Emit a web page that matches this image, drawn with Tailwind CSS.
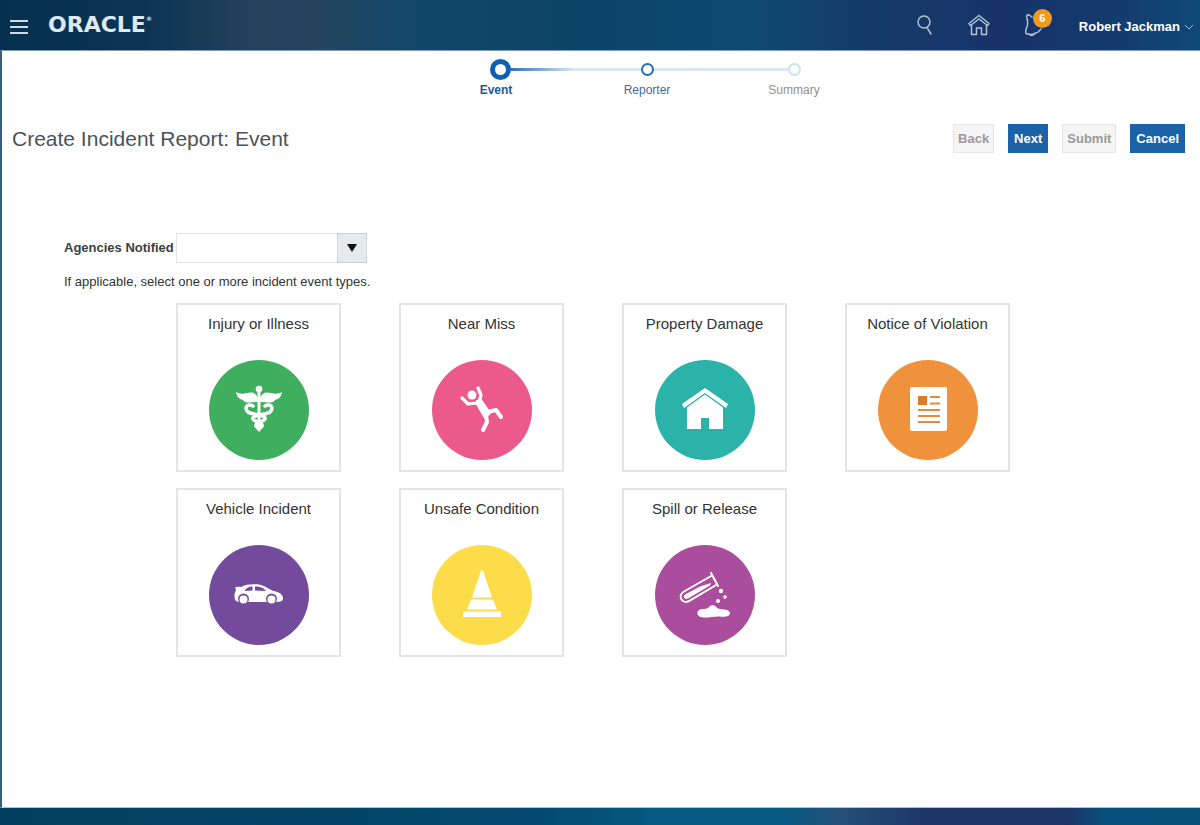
<!DOCTYPE html>
<html lang="en">
<head>
    <meta charset="UTF-8">
    <meta name="viewport" content="width=device-width, initial-scale=1.0">
    <title>Create Incident Report: Event</title>
    <script src="https://cdn.jsdelivr.net/npm/@tailwindcss/browser@4"></script>
</head>
<body class="min-h-screen flex flex-col bg-[#01466b] font-['Liberation_Sans',Arial,sans-serif] text-[13px] text-[#333]">
    <header class="h-[50px] flex items-center justify-between pl-2.5 pr-1.5 bg-[linear-gradient(90deg,#06304f_0%,#0b3454_12%,#24415c_21%,#24455f_27%,#12466a_34%,#0b4468_50%,#0c4a70_62%,#163a68_74%,#17336a_84%,#153a6c_92%,#0e4979_100%)]">
        <div class="flex items-center gap-5">
            <button type="button" aria-label="Menu" class="pt-1">
                <svg class="w-[18px] h-4" viewBox="0 0 18 16" fill="none" stroke="#d3dae0" stroke-width="2"><path d="M0 2h18M0 8h18M0 14h18"/></svg>
            </button>
            <a href="#" class="flex items-start font-bold text-[22px] leading-[50px] text-[#dfe9f1] font-['DejaVu_Sans',sans-serif]">ORACLE<span class="text-[6px] leading-[38px]">®</span></a>
        </div>
        <div class="flex items-center">
            <button type="button" aria-label="Search" class="mr-[33px]">
                <svg class="w-5 h-6" viewBox="0 0 20 24" fill="none" stroke="#b3c0d6" stroke-width="1.5" stroke-linecap="round"><circle cx="10" cy="9" r="6"/><path d="M13 14.500l4 6.500"/></svg>
            </button>
            <a href="#" aria-label="Home" class="mr-8">
                <svg class="w-6 h-6" viewBox="0 0 24 24" fill="none" stroke="#b3c0d6" stroke-width="1.500" stroke-linejoin="round"><path d="M4.500 12v9.500h5V15h5v6.500h5V12"/><path d="M2 10.500L12 2.500l10 8-1.500 2L12 6l-8.500 6.500z"/></svg>
            </a>
            <button type="button" aria-label="Notifications" class="relative mr-8">
                <svg class="w-6 h-6" viewBox="0 0 24 24" fill="none" stroke="#b3c0d6" stroke-width="1.500" stroke-linejoin="round" stroke-linecap="round"><path d="M6 2C4 1 3 3 4 5c1 4 1 8-1 11 0 2-1 5 1 5 4 1 8 0 11-2l3-3"/><path d="M6 2l3 2M6 21c2 2 5 2 6-1"/></svg>
                <span class="absolute -top-1 left-2.5 w-[19px] h-[19px] rounded-full bg-[#f09a1c] text-white text-[11px] leading-[19px] font-bold text-center">6</span>
            </button>
            <button type="button" class="flex items-center gap-1 pt-1 font-bold text-white">
                Robert Jackman
                <svg class="w-2.5 h-2" viewBox="0 0 10 8" fill="none" stroke="#a9bdd4"><path d="M1 2l4 4 4-4"/></svg>
            </button>
        </div>
    </header>

    <main class="grow bg-white border-l-2 border-l-[#34607e] border-t border-t-[#7f9db9] border-b border-b-[#a9c4d3]">
        <!-- progress -->
        <ol class="flex justify-center pl-[92px] pt-[7px] text-center text-[12px] leading-5">
            <li aria-current="step" class="w-[147px] font-bold text-[#1f5b98]">
                <div class="flex items-center justify-center h-[22px]">
                    <span class="flex-1"></span>
                    <span class="w-[21px] h-[21px] rounded-full border-[5px] border-[#0b62b5]"></span>
                    <span class="flex-1 h-[3px] bg-linear-to-r from-[#2a72b8] to-[#dbe8f3]"></span>
                </div>
                <span class="mr-2">Event</span>
            </li>
            <li class="w-[147px] text-[#3a6ea5]">
                <div class="flex items-center justify-center h-[22px]">
                    <span class="flex-1 h-[3px] bg-[#dbe8f3]"></span>
                    <span class="w-[13px] h-[13px] rounded-full border-2 border-[#2a6cad]"></span>
                    <span class="flex-1 h-[3px] bg-[#dbe8f3]"></span>
                </div>
                Reporter
            </li>
            <li class="w-[147px] text-[#8f8f8f]">
                <div class="flex items-center justify-center h-[22px]">
                    <span class="flex-1 h-[3px] bg-[#dbe8f3]"></span>
                    <span class="w-[13px] h-[13px] rounded-full border-2 border-[#cfe0ee]"></span>
                    <span class="flex-1"></span>
                </div>
                Summary
            </li>
        </ol>

        <div class="flex items-center justify-between mt-6 pl-2.5 pr-[15px]">
            <h1 class="text-[21px] leading-7 text-[#4a5359]">Create Incident Report: Event</h1>
            <div class="flex gap-3.5 font-bold">
                <button type="button" disabled class="h-[29px] px-1 border border-[#e6e7e9] bg-[#f5f5f6] text-[#9a9a9a]">Back</button>
                <button type="button" class="h-[29px] px-1.5 bg-[#1c62a8] text-white">Next</button>
                <button type="button" disabled class="h-[29px] px-1 border border-[#e6e7e9] bg-[#f5f5f6] text-[#9a9a9a]">Submit</button>
                <button type="button" class="h-[29px] px-1.5 bg-[#1c62a8] text-white">Cancel</button>
            </div>
        </div>

        <form class="mt-20 pl-[62px]">
            <div class="flex items-center gap-0.5">
                <label for="agencies" class="font-bold text-[#3b3f42]">Agencies Notified</label>
                <div class="relative">
                    <select id="agencies" class="appearance-none block w-[191px] h-[30px] px-2 border border-[#e3e5e7] bg-white"><option></option></select>
                    <span class="absolute right-0 top-0 w-[30px] h-[30px] flex items-center justify-center border border-[#cdd2d7] bg-[#e6eaed] pointer-events-none">
                        <svg class="w-2.5 h-2" viewBox="0 0 10 8" fill="#111"><path d="M0 0h10L5 8z"/></svg>
                    </span>
                </div>
            </div>
            <p class="mt-2.5 leading-[18px]">If applicable, select one or more incident event types.</p>

            <!-- event types -->
            <div class="flex flex-wrap gap-x-[58px] gap-y-4 max-w-[960px] mt-3 pl-28 text-[15px]">
                <button type="button" class="w-[165px] h-[169px] flex flex-col items-center justify-between pt-2 pb-2.5 border-2 border-[#e4e4e4]">
                    Injury or Illness
                    <svg class="w-[100px] h-[100px] rounded-full bg-[#3fae5f]" viewBox="0 0 100 100" fill="none" stroke="#fff" stroke-linecap="round">
                        <circle cx="50" cy="29" r="3.300" fill="#fff" stroke="none"/>
                        <path d="M50 31v39" stroke-width="3"/>
                        <path d="M49 38C46 32 43 32 38 33C34 34 30 34 27 32C28 38 31 39 34 40C36 44 42 42 49 42zM51 38C54 32 57 32 62 33C66 34 70 34 73 32C72 38 69 39 66 40C64 44 58 42 51 42z" fill="#fff" stroke="none"/>
                        <path d="M44 46C36 42 35 51 41 53C47 55 57 55 56 59C55 62 46 62 47 66L50 69M56 46C64 42 65 51 59 53C53 55 43 55 44 59C45 62 54 62 53 66L50 69" stroke-width="3.600"/>
                    </svg>
                </button>
                <button type="button" class="w-[165px] h-[169px] flex flex-col items-center justify-between pt-2 pb-2.5 border-2 border-[#e4e4e4]">
                    Near Miss
                    <svg class="w-[100px] h-[100px] rounded-full bg-[#eb5a8b]" viewBox="0 0 100 100" fill="none" stroke="#fff" stroke-linecap="round" stroke-linejoin="round">
                        <circle cx="40" cy="35" r="4.500" fill="#fff" stroke="none"/>
                        <path d="M30 38l6 6 9-1M46 28l3 7-2 8" stroke-width="3.200"/>
                        <path d="M45 41l4-1 9 13-5 5-8-14z" fill="#fff" stroke-width="2"/>
                        <path d="M55 52l9-2 5 7M54 55l1 7-4 8" stroke-width="4"/>
                    </svg>
                </button>
                <button type="button" class="w-[165px] h-[169px] flex flex-col items-center justify-between pt-2 pb-2.5 border-2 border-[#e4e4e4]">
                    Property Damage
                    <svg class="w-[100px] h-[100px] rounded-full bg-[#2bb3a9]" viewBox="0 0 100 100" fill="#fff">
                        <path d="M50 28l23 16-2 4-21-15-21 15-2-4z"/>
                        <path d="M50 34.500l18 13V69H54V58h-8v11H32V47.500z"/>
                    </svg>
                </button>
                <button type="button" class="w-[165px] h-[169px] flex flex-col items-center justify-between pt-2 pb-2.5 border-2 border-[#e4e4e4]">
                    Notice of Violation
                    <svg class="w-[100px] h-[100px] rounded-full bg-[#f0923b]" viewBox="0 0 100 100">
                        <rect x="32" y="27" width="37" height="44" rx="2" fill="#fff"/>
                        <path d="M40 36h9v9h-9z" fill="#e07b25"/>
                        <path d="M52 37h10M52 43.500h10M40 50h22M40 56h22M40 62h22" stroke="#e58a3c" stroke-width="2"/>
                    </svg>
                </button>
                <button type="button" class="w-[165px] h-[169px] flex flex-col items-center justify-between pt-2 pb-2.5 border-2 border-[#e4e4e4]">
                    Vehicle Incident
                    <svg class="w-[100px] h-[100px] rounded-full bg-[#744a9c]" viewBox="0 0 100 100" fill="#fff">
                        <path d="M26 42.500C28 41.500 30 41.500 32 42C37 39 44 39 50 39.500C55 40.500 59 43 63 45.500C68 46.500 73 48 74 52.500C74 55 73 56.500 71 56.500L68 57H30C27 56.500 25 55 25.500 49L27 45z"/>
                        <path d="M35.500 46C38 42.500 40 41.500 43.500 41.500v4zM46 41.500c5 0 8 1 11 4.500l-11-.5z" fill="#744a9c"/>
                        <circle cx="34.500" cy="54" r="5.500" fill="#744a9c"/>
                        <circle cx="62.500" cy="54" r="5.500" fill="#744a9c"/>
                        <circle cx="34.500" cy="54.500" r="4"/>
                        <circle cx="62.500" cy="54.500" r="4"/>
                    </svg>
                </button>
                <button type="button" class="w-[165px] h-[169px] flex flex-col items-center justify-between pt-2 pb-2.5 border-2 border-[#e4e4e4]">
                    Unsafe Condition
                    <svg class="w-[100px] h-[100px] rounded-full bg-[#fddc49]" viewBox="0 0 100 100" fill="#fff">
                        <path d="M49 25.500h2L60 52.500H40zM39 54.500h22l4 10H35zM31 66.500h38V72H31z"/>
                    </svg>
                </button>
                <button type="button" class="w-[165px] h-[169px] flex flex-col items-center justify-between pt-2 pb-2.5 border-2 border-[#e4e4e4]">
                    Spill or Release
                    <svg class="w-[100px] h-[100px] rounded-full bg-[#ab4d9d]" viewBox="0 0 100 100" fill="#fff">
                        <g fill="none" stroke="#fff" stroke-width="2" stroke-linecap="round">
                            <path d="M56 28l7 13"/>
                            <path d="M57 30.500L29 46.500C22 51 27 59.500 34 56L62 39.500"/>
                        </g>
                        <path d="M31 49L45 41.500 56 38 55 40.500 33 53.500C29 55 27 51 31 49z"/>
                        <circle cx="66" cy="46" r="2.200"/>
                        <circle cx="70" cy="52" r="1.800"/>
                        <circle cx="63" cy="56" r="2"/>
                        <path d="M44 65C47 63 52 65 54 62C56 59 61 60 62 63C65 65 74 63 75 68C75 72 69 72 65 71.500C59 71 54 73 48 72.500C42 72 41 67 44 65z"/>
                    </svg>
                </button>
            </div>
        </form>
    </main>

    <footer class="h-[17px] bg-[linear-gradient(90deg,#033f60_0%,#04466a_30%,#034a70_45%,#065a82_55%,#065a84_65%,#235078_70%,#1c3767_77%,#1a3566_89%,#07507c_92%,#06507a_100%)]"></footer>
</body>
</html>
